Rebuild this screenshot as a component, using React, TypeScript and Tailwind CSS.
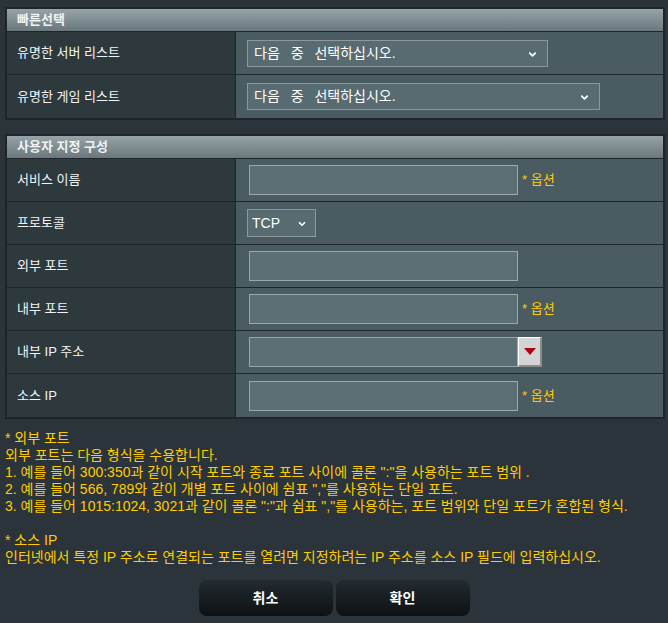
import { ChevronDown } from "lucide-react";

const FONT = "font-['Liberation_Sans','Noto_Sans_CJK_KR',sans-serif]";

function Header({ title }: { title: string }) {
    return (
        <div className="h-[23px] flex items-center px-[10px] bg-gradient-to-b from-[#96a3a8] to-[#6a777c] border-b border-[#1f2528] text-[13px] font-bold text-[#eef3f5]">
            {title}
        </div>
    );
}

function Row({
    label,
    last,
    children,
}: {
    label: string;
    last?: boolean;
    children: React.ReactNode;
}) {
    return (
        <div
            className={`flex h-[43px] ${last ? "" : "border-b border-[#1f2528]"}`}
        >
            <div className="w-[229px] shrink-0 flex items-center px-[10px] bg-[#2e393e] border-r border-[#1f2528] text-[13px] text-[#f2f5f6]">
                {label}
            </div>
            <div className="flex-1 flex items-center pl-[11px] bg-[#4a5b61]">
                {children}
            </div>
        </div>
    );
}

function FakeSelect({ width, text }: { width: string; text: string }) {
    return (
        <div
            className={`relative ${width} h-[27px] flex items-center pl-[6px] bg-[#586b71] border border-[#8e989c] text-[14px] text-white [word-spacing:7px]`}
        >
            {text}
            <ChevronDown
                className="absolute right-[9px] top-[8px] h-[11px] w-[11px] text-white"
                strokeWidth={4}
            />
        </div>
    );
}

function TextBox({ optional }: { optional?: boolean }) {
    return (
        <div className="flex items-center">
            <input
                type="text"
                className="ml-[2px] w-[269px] h-[30px] bg-[#5b6f75] border border-[#9ba7ab] outline-none"
            />
            {optional && (
                <span className="ml-[4px] text-[13px] text-[#ffcc00]">
                    * 옵션
                </span>
            )}
        </div>
    );
}

const NOTES = [
    "* 외부 포트",
    "외부 포트는 다음 형식을 수용합니다.",
    '1. 예를 들어 300:350과 같이 시작 포트와 종료 포트 사이에 콜론 ":"을 사용하는 포트 범위 .',
    '2. 예를 들어 566, 789와 같이 개별 포트 사이에 쉼표 ","를 사용하는 단일 포트.',
    '3. 예를 들어 1015:1024, 3021과 같이 콜론 ":"과 쉼표 ","를 사용하는, 포트 범위와 단일 포트가 혼합된 형식.',
    "",
    "* 소스 IP",
    "인터넷에서 특정 IP 주소로 연결되는 포트를 열려면 지정하려는 IP 주소를 소스 IP 필드에 입력하십시오.",
];

export default function App() {
    return (
        <div className={`${FONT} w-[668px] h-[623px] bg-[#2b343a] pt-[7px] overflow-hidden`}>
            <div className="ml-[5px] w-[660px] border-2 border-[#1f2528]">
                <Header title="빠른선택" />
                <Row label="유명한 서버 리스트">
                    <FakeSelect width="w-[301px]" text="다음 중 선택하십시오." />
                </Row>
                <Row label="유명한 게임 리스트" last>
                    <FakeSelect width="w-[353px]" text="다음 중 선택하십시오." />
                </Row>
            </div>

            <div className="mt-[14px] ml-[5px] w-[660px] border-2 border-[#1f2528]">
                <Header title="사용자 지정 구성" />
                <Row label="서비스 이름">
                    <TextBox optional />
                </Row>
                <Row label="프로토콜">
                    <div className="relative w-[69px] h-[28px] flex items-center pl-[4px] bg-[#586b71] border border-[#8e989c] text-[14px] text-white">
                        TCP
                        <ChevronDown
                            className="absolute right-[8px] top-[9px] h-[10px] w-[10px] text-white"
                            strokeWidth={4}
                        />
                    </div>
                </Row>
                <Row label="외부 포트">
                    <TextBox />
                </Row>
                <Row label="내부 포트">
                    <TextBox optional />
                </Row>
                <Row label="내부 IP 주소">
                    <div className="flex items-center">
                        <input
                            type="text"
                            className="ml-[2px] w-[269px] h-[30px] bg-[#5b6f75] border border-[#9ba7ab] outline-none"
                        />
                        <div className="w-[24px] h-[30px] flex items-center justify-center bg-[#d4d4d4] border-t border-l border-t-white border-l-white border-r-2 border-b-2 border-r-[#8c8c8c] border-b-[#8c8c8c]">
                            <svg width="12" height="7" viewBox="0 0 12 7">
                                <polygon points="0,0 12,0 6,7" fill="#b00010" />
                            </svg>
                        </div>
                    </div>
                </Row>
                <Row label="소스 IP" last>
                    <TextBox optional />
                </Row>
            </div>

            <div className="mt-[11px] ml-[5px] text-[14px] leading-[17px] text-[#ffcc00]">
                {NOTES.map((line, i) => (
                    <div key={i} className="h-[17px] whitespace-nowrap">
                        {line}
                    </div>
                ))}
            </div>

            <div className="mt-[14px] flex justify-center gap-[3px]">
                {["취소", "확인"].map((t) => (
                    <button
                        key={t}
                        type="button"
                        className="w-[134px] h-[36px] rounded-[8px] bg-gradient-to-b from-[#222c31] to-[#0e1113] text-[14px] font-bold text-white"
                    >
                        {t}
                    </button>
                ))}
            </div>
        </div>
    );
}
